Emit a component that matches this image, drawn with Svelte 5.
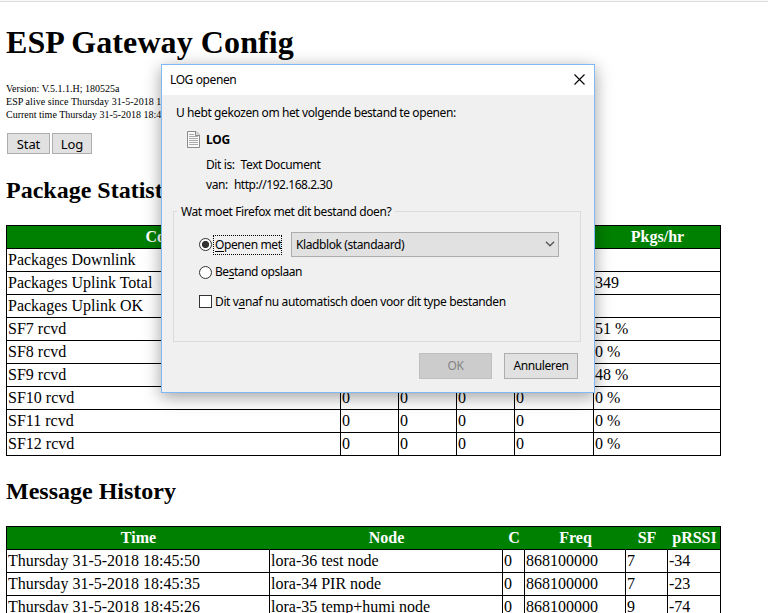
<script>
  const stats = [
    ['Packages Downlink', '', '', '', '', ''],
    ['Packages Uplink Total', '', '', '', '', '349'],
    ['Packages Uplink OK', '', '', '', '', ''],
    ['SF7 rcvd', '', '', '', '', '51 %'],
    ['SF8 rcvd', '', '', '', '', '0 %'],
    ['SF9 rcvd', '', '', '', '', '48 %'],
    ['SF10 rcvd', '0', '0', '0', '0', '0 %'],
    ['SF11 rcvd', '0', '0', '0', '0', '0 %'],
    ['SF12 rcvd', '0', '0', '0', '0', '0 %'],
  ];
  const statWidths = [334, 58, 58, 58, 79, 127];
  const statHead = ['Counter', '', '', '', '', 'Pkgs/hr'];

  const messages = [
    ['Thursday 31-5-2018 18:45:50', 'lora-36 test node', '0', '868100000', '7', '-34'],
    ['Thursday 31-5-2018 18:45:35', 'lora-34 PIR node', '0', '868100000', '7', '-23'],
    ['Thursday 31-5-2018 18:45:26', 'lora-35 temp+humi node', '0', '868100000', '9', '-74'],
  ];
  const messageWidths = [263, 233, 22, 101, 42, 53];
  const messageHead = ['Time', 'Node', 'C', 'Freq', 'SF', 'pRSSI'];
</script>

{#snippet grid(widths, head, rows)}
  <table>
    <colgroup>
      {#each widths as w}<col style="width: {w}px" />{/each}
    </colgroup>
    <thead>
      <tr>{#each head as h}<th>{h}</th>{/each}</tr>
    </thead>
    <tbody>
      {#each rows as row}
        <tr>{#each row as cell}<td>{cell}</td>{/each}</tr>
      {/each}
    </tbody>
  </table>
{/snippet}

<div class="page">
  <div class="edge"></div>
  <main>
    <h1>ESP Gateway Config</h1>
    <div class="info">
      <div>Version: V.5.1.1.H; 180525a</div>
      <div class="alive">ESP alive since Thursday 31-5-2018 1</div>
      <div>Current time Thursday 31-5-2018 18:4</div>
    </div>
    <div class="nav">
      <button class="stat">Stat</button>
      <button class="log">Log</button>
    </div>
    <h2>Package Statist</h2>
    {@render grid(statWidths, statHead, stats)}
    <h2 class="history">Message History</h2>
    {@render grid(messageWidths, messageHead, messages)}
  </main>

  <div class="dialog">
    <div class="titlebar">
      <span class="title">LOG openen</span>
      <svg width="11" height="11" viewBox="0 0 11 11"><path d="M.5 .5 10.5 10.5M10.5 .5.5 10.5" stroke="#000" stroke-width="1.1" fill="none" /></svg>
    </div>
    <div class="body">
      <div class="intro">U hebt gekozen om het volgende bestand te openen:</div>
      <div class="file">
        <svg width="13" height="17" viewBox="0 0 13 17">
          <path d="M.5 .5H9L12.500 4V16.500H.5Z" fill="#fafafa" stroke="#8b8b8b" />
          <path d="M8.500 .5V4.500H12.500" fill="#ddd" stroke="#8b8b8b" />
          <path d="M2 3.500H7M2 5.500H11M2 7.500H11M2 9.500H11M2 11.500H11M2 13.500H11" stroke="#aaa" />
        </svg>
        <b>LOG</b>
      </div>
      <div class="meta kind"><span>Dit is:</span><span>Text Document</span></div>
      <div class="meta from"><span>van:</span><span class="url">http://192.168.2.30</span></div>
      <div class="group">
        <div class="legend">Wat moet Firefox met dit bestand doen?</div>
        <div class="open">
          <span class="radio on"></span>
          <span class="focus"><u>O</u>penen met</span>
          <div class="select">
            <span>Kladblok (standaard)</span>
            <svg width="10" height="6" viewBox="0 0 10 6"><path d="M.9 .7 5 4.800 9.100 .7" stroke="#555" stroke-width="1.300" fill="none" /></svg>
          </div>
        </div>
        <div class="save"><span class="radio"></span><span class="save-text">Be<u>s</u>tand opslaan</span></div>
        <div class="auto"><span class="check"></span><span>Dit v<u>a</u>naf nu automatisch doen voor dit type bestanden</span></div>
      </div>
      <div class="actions">
        <button class="ok" disabled>OK</button>
        <button class="cancel">Annuleren</button>
      </div>
    </div>
  </div>
</div>

<style>
  :global(body) { margin: 0; background: #fff; overflow: hidden; }
  .page {
    position: relative;
    width: 768px;
    height: 613px;
    overflow: hidden;
    background: #fff;
    color: #000;
    font-family: "Liberation Serif", serif;
    font-size: 16px;
  }
  .edge { height: 1px; background: #f9f9f9; border-bottom: 1px solid #dcdcdc; }
  main { padding: 21px 0 0 6px; }
  h1 { margin: 0; font-size: 32px; line-height: 38px; letter-spacing: .09px; white-space: nowrap; }
  .info { margin-top: 21px; font-size: 10px; line-height: 13px; white-space: nowrap; }
  .alive { letter-spacing: .05px; }
  .nav { display: flex; gap: 2px; margin: 12px 0 0 1px; }
  button {
    box-sizing: border-box;
    padding: 0;
    margin: 0;
    border: 1px solid #adadad;
    background: #e1e1e1;
    color: #000;
    border-radius: 0;
    font-family: "Noto Sans", sans-serif;
    white-space: nowrap;
  }
  .nav button { height: 21px; padding-top: 1px; font-size: 13px; line-height: 18px; letter-spacing: -.1px; }
  .stat { width: 43px; }
  .log { width: 40px; }
  h2 { margin: 22px 0 21px; font-size: 24px; line-height: 28px; white-space: nowrap; }
  h2.history { margin: 21px 0 21px; }
  table {
    width: 715px;
    table-layout: fixed;
    border-collapse: separate;
    border-spacing: 0;
    border: solid #000;
    border-width: 1px 0 0 1px;
  }
  th, td {
    box-sizing: border-box;
    height: 23px;
    padding: 0 0 0 1px;
    border: solid #000;
    border-width: 0 1px 1px 0;
    line-height: 22px;
    white-space: nowrap;
    overflow: hidden;
    text-align: left;
  }
  th { background: #008000; color: #fff; text-align: center; border-right-color: #008000; }
  th:last-child { border-right-color: #000; }

  .dialog {
    position: absolute;
    left: 161px;
    top: 64px;
    width: 432px;
    height: 327px;
    border: 1px solid #7eb9f5;
    background: #f0f0f0;
    box-shadow: 0 4px 16px rgba(0, 0, 0, .38);
    font-family: "Noto Sans", sans-serif;
    font-size: 12px;
    letter-spacing: -.4px;
    white-space: nowrap;
  }
  .titlebar {
    display: flex;
    justify-content: space-between;
    align-items: center;
    height: 30px;
    padding: 0 9px 0 8px;
    background: #fff;
    box-sizing: border-box;
  }
  .title { margin-top: -2px; }
  .titlebar svg { margin-top: -1px; }
  .body { line-height: 16px; }
  .intro { padding: 10px 0 0 14px; }
  .file { display: flex; align-items: center; gap: 6px; height: 17px; padding: 10px 0 0 25px; }
  .file b { letter-spacing: -.2px; }
  .meta { display: flex; padding-left: 44px; }
  .kind { gap: 6px; padding-top: 9px; }
  .from { gap: 6px; padding-top: 4px; }
  .url { letter-spacing: -.46px; }
  .group {
    box-sizing: border-box;
    width: 408px;
    height: 131px;
    margin: 18px 0 0 11px;
    border: 1px solid #dcdcdc;
  }
  .legend { width: 214px; height: 16px; margin: -8px 0 0 3px; padding-left: 4px; background: #f0f0f0; }
  .open, .save, .auto { display: flex; align-items: center; padding-left: 25px; }
  .open { height: 25px; margin-top: 12px; }
  .radio {
    box-sizing: border-box;
    flex: none;
    width: 13px;
    height: 13px;
    border: 1px solid #333;
    border-radius: 50%;
    background: #fff;
  }
  .on { background: radial-gradient(circle, #333 0 3.300px, #fff 3.900px); }
  .focus { box-sizing: border-box; width: 69px; height: 20px; margin: 1px 0 0 1px; padding-left: 1px; border: 1px dotted #000; line-height: 17px; }
  .select {
    box-sizing: border-box;
    display: flex;
    align-items: center;
    justify-content: space-between;
    width: 268px;
    height: 25px;
    margin-left: 9px;
    padding: 0 3px 0 4px;
    border: 1px solid #adadad;
    background: #e1e1e1;
  }
  .select svg { margin-top: -2px; }
  .save { height: 17px; gap: 3px; margin-top: 7px; }
  .save-text { margin-top: -1px; letter-spacing: -.45px; }
  .auto { height: 17px; gap: 3px; margin-top: 12px; letter-spacing: -.38px; }
  .check { box-sizing: border-box; width: 13px; height: 13px; border: 1px solid #333; background: #fff; }
  u { text-underline-offset: 2px; text-decoration-skip-ink: none; }
  .actions { display: flex; gap: 12px; padding: 11px 0 0 257px; }
  .actions button { height: 26px; font-size: 12px; line-height: 24px; letter-spacing: -.4px; }
  .ok { width: 73px; border-color: #bfbfbf; background: #ccc; color: #838383; }
  .cancel { width: 74px; }
</style>
